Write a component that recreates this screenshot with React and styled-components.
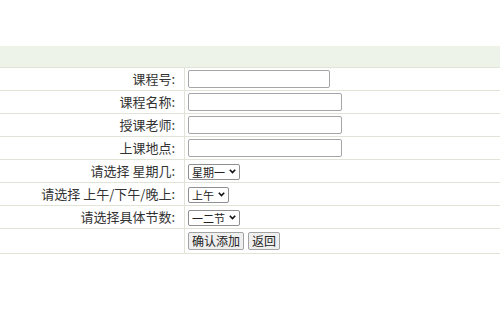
import React from "react";
import styled, { createGlobalStyle } from "styled-components";

const Global = createGlobalStyle`
  html, body { margin: 0; padding: 0; background: #fff; }
  body { font-family: "Noto Sans CJK SC", "Noto Sans", sans-serif; color: #333; }
`;

const Page = styled.div`
  padding-top: 46px;
`;

const Table = styled.table`
  width: 100%;
  border-collapse: collapse;
  font-size: 13px;
`;

const HeadRow = styled.tr`
  background: #eef3e9;
  height: 21px;
  & > td { border-bottom: 1px solid #dfe4d6; }
`;

const Row = styled.tr`
  height: ${(p) => p.$h || 23}px;
  & > td { border-bottom: 1px solid #dfe4d6; padding: 0; }
`;

const Label = styled.td`
  width: 175px;
  text-align: right;
  padding-right: 9px !important;
  border-right: 1px solid #dfe4d6;
  white-space: nowrap;
  line-height: 22px;
`;

const Field = styled.td`
  padding-left: 3px !important;
  vertical-align: middle;
`;

const TextInput = styled.input`
  box-sizing: border-box;
  width: ${(p) => p.$w}px;
  height: 18px;
  margin: 0;
  border: 1px solid #a6a6a6;
  border-radius: 2px;
  display: block;
`;

const SelectWrap = styled.div`
  position: relative;
  display: inline-block;
  vertical-align: middle;
`;

const Select = styled.select`
  appearance: none;
  -webkit-appearance: none;
  box-sizing: border-box;
  width: ${(p) => p.$w}px;
  height: 16px;
  font-size: 11px;
  line-height: 14px;
  font-family: "Noto Sans CJK SC", sans-serif;
  margin: 0;
  padding: 0 12px 0 3px;
  border: 1px solid #8f8f8f;
  border-radius: 2px;
  background: #fff;
  color: #222;
  display: block;
`;

const Chevron = styled.svg`
  position: absolute;
  right: 4px;
  top: 5px;
  width: 7px;
  height: 5px;
  pointer-events: none;
`;

const Buttons = styled.div`
  display: flex;
  gap: 4px;
`;

const Button = styled.button`
  box-sizing: border-box;
  height: 18px;
  padding: 0 3px;
  font-size: 12px;
  font-family: "Noto Sans CJK SC", sans-serif;
  background: #efefef;
  border: 1px solid #a3a3a3;
  border-radius: 2px;
  color: #222;
  line-height: 15px;
`;

function Dropdown({ w, value, options }) {
  return (
    <SelectWrap>
      <Select $w={w} defaultValue={value}>
        {options.map((o) => (
          <option key={o} value={o}>{o}</option>
        ))}
      </Select>
      <Chevron viewBox="0 0 7 5">
        <path d="M0.8 0.8 L3.5 3.6 L6.2 0.8" fill="none" stroke="#111" strokeWidth="1.6" />
      </Chevron>
    </SelectWrap>
  );
}

export default function App() {
  return (
    <Page>
      <Global />
      <Table>
        <tbody>
          <HeadRow>
            <td colSpan={2}></td>
          </HeadRow>
          <Row>
            <Label>课程号:</Label>
            <Field><TextInput $w={142} /></Field>
          </Row>
          <Row>
            <Label>课程名称:</Label>
            <Field><TextInput $w={154} /></Field>
          </Row>
          <Row>
            <Label>授课老师:</Label>
            <Field><TextInput $w={154} /></Field>
          </Row>
          <Row>
            <Label>上课地点:</Label>
            <Field><TextInput $w={154} /></Field>
          </Row>
          <Row>
            <Label>请选择 星期几:</Label>
            <Field>
              <Dropdown w={52} value="星期一" options={["星期一", "星期二", "星期三", "星期四", "星期五"]} />
            </Field>
          </Row>
          <Row>
            <Label>请选择 上午/下午/晚上:</Label>
            <Field>
              <Dropdown w={41} value="上午" options={["上午", "下午", "晚上"]} />
            </Field>
          </Row>
          <Row>
            <Label>请选择具体节数:</Label>
            <Field>
              <Dropdown w={52} value="一二节" options={["一二节", "三四节", "五六节", "七八节"]} />
            </Field>
          </Row>
          <Row $h={25}>
            <Label></Label>
            <Field>
              <Buttons>
                <Button>确认添加</Button>
                <Button>返回</Button>
              </Buttons>
            </Field>
          </Row>
        </tbody>
      </Table>
    </Page>
  );
}
